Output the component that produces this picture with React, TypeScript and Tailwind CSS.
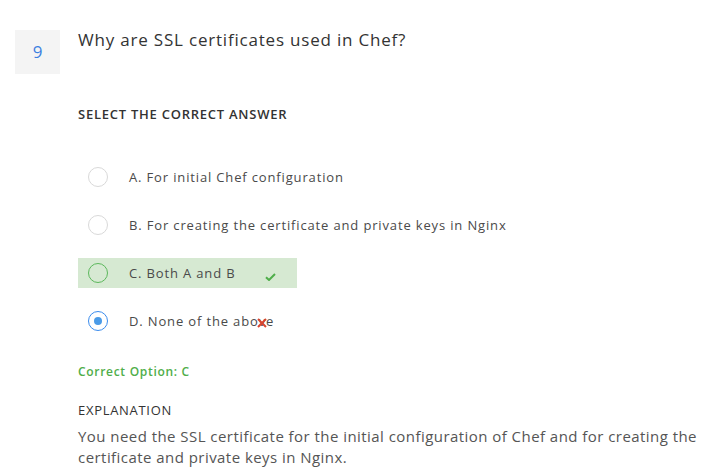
const FONT = { fontFamily: "'Open Sans', 'DejaVu Sans', sans-serif" };

type Opt = { label: string; state: "none" | "correct" | "wrong" };

const OPTIONS: Opt[] = [
  { label: "A. For initial Chef configuration", state: "none" },
  { label: "B. For creating the certificate and private keys in Nginx", state: "none" },
  { label: "C. Both A and B", state: "correct" },
  { label: "D. None of the above", state: "wrong" },
];

function Radio({ state }: { state: Opt["state"] }) {
  if (state === "correct") {
    return <span className="h-5 w-5 shrink-0 rounded-full border border-[#5cb85c]" />;
  }
  if (state === "wrong") {
    return (
      <span className="flex h-5 w-5 shrink-0 items-center justify-center rounded-full border border-[#3b8ced] bg-white">
        <span className="h-2 w-2 rounded-full bg-[#4a9be8]" />
      </span>
    );
  }
  return <span className="h-5 w-5 shrink-0 rounded-full border border-[#d9d9d9] bg-white" />;
}

function Option({ opt }: { opt: Opt }) {
  const correct = opt.state === "correct";
  return (
    <div
      className={`flex h-[30px] w-[219px] items-center gap-[21px] whitespace-nowrap pl-[10px] ${
        correct ? "bg-[#d6e9d2]" : ""
      }`}
    >
      <Radio state={opt.state} />
      <span className="relative text-[13px] leading-[20px] tracking-[0.85px] text-[#4a4a4a]">
        {opt.label}
        {correct && (
          <svg className="absolute left-[136px] top-[10px]" width="11" height="8" viewBox="0 0 11 8">
            <path d="M1 4.2 L4 7 L10 1" fill="none" stroke="#4fae4a" strokeWidth="2" />
          </svg>
        )}
        {opt.state === "wrong" && (
          <svg className="absolute left-[128px] top-[7px]" width="10" height="10" viewBox="0 0 10 10">
            <path d="M1 1 L9 9 M9 1 L1 9" stroke="#d9452f" strokeWidth="2" />
          </svg>
        )}
      </span>
    </div>
  );
}

export default function App() {
  return (
    <div className="h-[476px] w-[720px] overflow-hidden bg-white" style={FONT}>
      <div className="flex gap-[18px] pl-[15px] pt-[30px]">
        <div className="flex h-[44px] w-[45px] items-center justify-center bg-[#f4f4f4] text-[17px] text-[#3d7fe0]">
          9
        </div>
        <div className="flex flex-col">
          <h1 className="-mt-[1px] text-[17px] leading-[22px] tracking-[0.8px] text-[#333]">
            Why are SSL certificates used in Chef?
          </h1>
          <h2 className="mt-[54px] text-[13px] leading-[18px] font-semibold tracking-[0.75px] text-[#333]">
            SELECT THE CORRECT ANSWER
          </h2>

          <div className="mt-[39px] flex flex-col gap-[18px]">
            {OPTIONS.map((o) => (
              <Option key={o.label} opt={o} />
            ))}
          </div>

          <p className="mt-[27px] text-[12px] font-semibold tracking-[0.7px] text-[#4fae4a]">Correct Option: C</p>
          <h3 className="mt-[20px] text-[13px] leading-[18px] font-medium tracking-[0.7px] text-[#333]">EXPLANATION</h3>
          <p className="mt-[7px] w-[630px] text-[15px] leading-[21px] tracking-[0.45px] text-[#555]">
            You need the SSL certificate for the initial configuration of Chef and for creating the certificate and
            private keys in Nginx.
          </p>
        </div>
      </div>
    </div>
  );
}
